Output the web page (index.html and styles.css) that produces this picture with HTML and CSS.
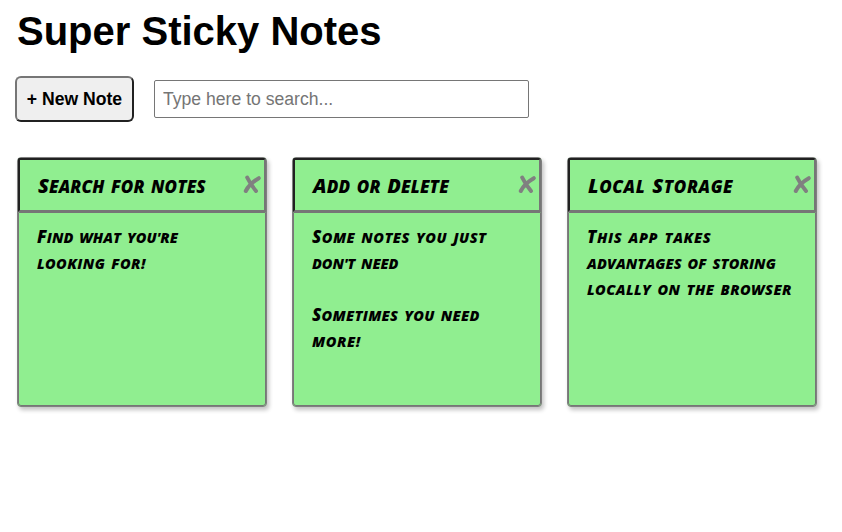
FILE: index.html
```html
<!DOCTYPE html>
<html lang="en">
<head>
<meta charset="utf-8">
<title>Super Sticky Notes</title>
<link rel="stylesheet" href="styles.css">
</head>
<body>
<header>
  <h1>Super Sticky Notes</h1>
  <div class="controls">
    <button class="new-note">+ New Note</button>
    <input class="search" type="text" placeholder="Type here to search...">
  </div>
</header>
<main class="notes">
  <article class="note">
    <div class="note-head">
      <h2><span class="t1"><b>S</b>earch for notes</span></h2>
      <svg class="close" viewBox="0 0 18 18"><path d="M4.2 2.5Q7.5 9.5 13 16M15.8 3.2Q6.5 8.5 2.8 16"/></svg>
    </div>
    <div class="note-body">
      <p><span class="l1"><b>F</b>ind what you're</span></p>
      <p><span class="l2">looking for!</span></p>
    </div>
  </article>
  <article class="note">
    <div class="note-head">
      <h2><span class="t2"><b>A</b>dd or <b>D</b>elete</span></h2>
      <svg class="close" viewBox="0 0 18 18"><path d="M4.2 2.5Q7.5 9.5 13 16M15.8 3.2Q6.5 8.5 2.8 16"/></svg>
    </div>
    <div class="note-body">
      <p><span class="l3"><b>S</b>ome notes you just</span></p>
      <p><span class="l4">don't need</span></p>
      <p></p>
      <p><span class="l5"><b>S</b>ometimes you need</span></p>
      <p><span class="l6">more!</span></p>
    </div>
  </article>
  <article class="note">
    <div class="note-head">
      <h2><span class="t3"><b>L</b>ocal <b>S</b>torage</span></h2>
      <svg class="close" viewBox="0 0 18 18"><path d="M4.2 2.5Q7.5 9.5 13 16M15.8 3.2Q6.5 8.5 2.8 16"/></svg>
    </div>
    <div class="note-body">
      <p><span class="l7"><b>T</b>his app takes</span></p>
      <p><span class="l8">advantages of storing</span></p>
      <p><span class="l9">locally on the browser</span></p>
    </div>
  </article>
</main>
</body>
</html>
```
FILE: styles.css
```css
* { box-sizing: border-box; }
body { margin: 0; min-height: 532px; background: #fff; color: #000; font-family: "Liberation Sans", Arial, sans-serif; }
h1, h2, p { margin: 0; }
h1 { padding: 7px 0 0 17px; font-size: 40px; line-height: 48px; white-space: nowrap; }
.controls { display: flex; align-items: center; gap: 20px; padding: 21px 0 0 15px; }
.new-note { width: 119px; height: 46px; padding: 0; border: 2px solid; border-color: #767676 #212121 #212121 #767676; border-radius: 6px; background: #efefef; color: #000; font: bold 17.6px "Liberation Sans", Arial, sans-serif; }
.search { width: 375px; height: 38px; padding: 0 8px; border: 1px solid #767676; border-radius: 2px; font: 17.6px "Liberation Sans", Arial, sans-serif; }
.search::placeholder { color: #757575; }
.notes { display: flex; gap: 25px; padding: 35px 0 20px 17px; }
.note { width: 250px; height: 250px; border: 1px solid #808080; border-radius: 4px; background: #90ee90; box-shadow: 2px 3px 4px rgba(0, 0, 0, 0.24); display: flex; flex-direction: column; font-family: "Open Sans", sans-serif; font-style: italic; font-weight: 800; text-transform: uppercase; }
.note-head { height: 54px; border: 2px solid; border-color: #212121 #767676 #767676 #212121; border-radius: 2px 2px 0 0; display: flex; align-items: center; justify-content: space-between; padding: 0 3px 0 18px; }
.note-head h2 { font-size: 17px; line-height: 24px; font-weight: 800; padding-top: 3px; white-space: nowrap; }
.note-head b { font-size: 20px; line-height: 20px; font-weight: 800; }
.close { width: 18px; height: 18px; margin-top: -2px; fill: none; stroke: #808080; stroke-width: 4; stroke-linecap: round; }
.note-body { flex: 1; border: 1px solid #767676; border-radius: 0 0 3px 3px; padding: 12px 18px; }
.note-body p { height: 26px; font-size: 14.5px; line-height: 26px; font-weight: 800; white-space: nowrap; }
.note-body b { font-size: 17px; line-height: 20px; font-weight: 800; }

.t1 { letter-spacing: 0.1px; word-spacing: 2px; }
.t2 { letter-spacing: 0.15px; word-spacing: 2px; }
.t3 { letter-spacing: 0.6px; word-spacing: 2px; }
.l1 { letter-spacing: 0.05px; word-spacing: 2px; }
.l2 { letter-spacing: 0.4px; word-spacing: 2px; }
.l3 { letter-spacing: 0.45px; word-spacing: 2px; }
.l4 { letter-spacing: -0.05px; word-spacing: 2px; }
.l5 { letter-spacing: 0.28px; word-spacing: 2px; }
.l6 { letter-spacing: 0.6px; }
.l7 { letter-spacing: 0.6px; word-spacing: 2px; }
.l8 { letter-spacing: 0.08px; word-spacing: 2px; }
.l9 { letter-spacing: 0.42px; word-spacing: 2px; }
```
